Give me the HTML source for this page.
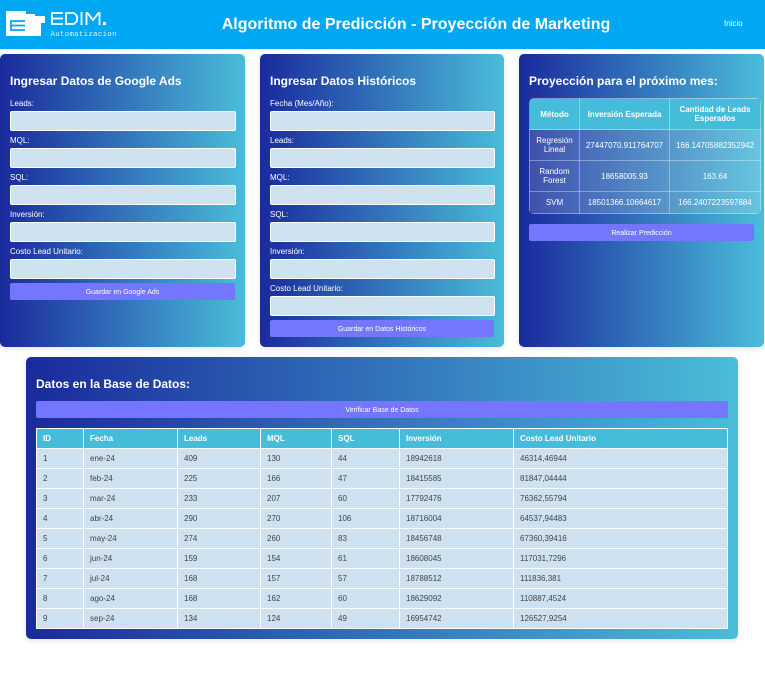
<!DOCTYPE html>
<html lang="es">
<head>
<meta charset="utf-8">
<title>Algoritmo de Predicción</title>
<style>
html,body{margin:0;padding:0;width:765px;height:673px;background:#fff;overflow:hidden;font-family:"Liberation Sans",Arial,sans-serif}
.header{position:absolute;left:0;top:0;width:765px;height:49px;background:#00a8f3}
.title{position:absolute;left:166px;width:500px;top:15px;text-align:center;color:#fff;font-size:16px;font-weight:bold;line-height:20px;white-space:nowrap}
.nav{position:absolute;left:724px;top:19px;color:#fff;font-size:8px;line-height:10px}
.card{position:absolute;border-radius:5px;background:linear-gradient(90deg,#1a2a9c,#4abdd9);box-shadow:0 2px 6px rgba(0,0,0,.1)}
h2{position:absolute;margin:0;color:#fff;font-size:12px;font-weight:bold;line-height:16px;white-space:nowrap}
label{position:absolute;color:#fff;font-size:8px;line-height:10px;white-space:nowrap}
.in{position:absolute;box-sizing:border-box;height:20px;background:#cfe2f0;border:1px solid #fff;border-radius:2px}
.btn{position:absolute;height:17px;background:#7476ff;border-radius:2px;color:#fff;font-size:7px;line-height:19px;text-align:center;white-space:nowrap}
table{position:absolute;border-collapse:collapse;table-layout:fixed}
.p{left:10px;top:44px;width:231px;height:116px;color:#fff;font-size:8px;text-align:center;background:rgba(255,255,255,.16);border-radius:5px;overflow:hidden}
.p th,.p td{border:1px solid rgba(255,255,255,.35);padding:0 2px;line-height:9px}
.p th{background:#45bcd9;font-weight:bold}
.d{left:10px;top:71px;width:691px;font-size:8px;color:#444}
.d th,.d td{border:1px solid #fff;padding:0 0 0 6px;height:19px;text-align:left;line-height:9px;background:#cde1f0}
.d th{background:#45bcd9;color:#fff;font-weight:bold}
</style>
</head>
<body>
<div class="header">
<svg style="position:absolute;left:0;top:0" width="125" height="48" viewBox="0 0 125 48">
<path fill="#fff" d="M6 11H26V14H35V16H45V23H41V36H6Z"/>
<path fill="none" stroke="#00a8f3" stroke-width="1.800" d="M25 21H11V30H25M11 25.500H25"/>
<path fill="none" stroke="#fff" stroke-width="1.800" d="M63 13H52V24H63M52 18.500H63M66 13H74L77 16V21L74 24H66ZM81.500 12V25M86.500 25V13H87.500L93 20L98.500 13H99.500V25"/>
<rect x="103" y="22" width="3" height="3" fill="#fff"/>
<text x="50.500" y="36" fill="#dff4ff" font-family="Liberation Mono,monospace" font-size="7.300" textLength="66">Automatizacion</text>
</svg>
<div class="title">Algoritmo de Predicción - Proyección de Marketing</div>
<div class="nav">Inicio</div>
</div>

<div class="card" style="left:0;top:54px;width:245px;height:293px">
<h2 style="left:10px;top:19px">Ingresar Datos de Google Ads</h2>
<label style="left:10px;top:45px">Leads:</label><div class="in" style="left:10px;top:57px;width:226px"></div>
<label style="left:10px;top:82px">MQL:</label><div class="in" style="left:10px;top:94px;width:226px"></div>
<label style="left:10px;top:119px">SQL:</label><div class="in" style="left:10px;top:131px;width:226px"></div>
<label style="left:10px;top:156px">Inversión:</label><div class="in" style="left:10px;top:168px;width:226px"></div>
<label style="left:10px;top:193px">Costo Lead Unitario:</label><div class="in" style="left:10px;top:205px;width:226px"></div>
<div class="btn" style="left:10px;top:229px;width:225px">Guardar en Google Ads</div>
</div>

<div class="card" style="left:260px;top:54px;width:244px;height:293px">
<h2 style="left:10px;top:19px">Ingresar Datos Históricos</h2>
<label style="left:10px;top:45px">Fecha (Mes/Año):</label><div class="in" style="left:10px;top:57px;width:225px"></div>
<label style="left:10px;top:82px">Leads:</label><div class="in" style="left:10px;top:94px;width:225px"></div>
<label style="left:10px;top:119px">MQL:</label><div class="in" style="left:10px;top:131px;width:225px"></div>
<label style="left:10px;top:156px">SQL:</label><div class="in" style="left:10px;top:168px;width:225px"></div>
<label style="left:10px;top:193px">Inversión:</label><div class="in" style="left:10px;top:205px;width:225px"></div>
<label style="left:10px;top:230px">Costo Lead Unitario:</label><div class="in" style="left:10px;top:242px;width:225px"></div>
<div class="btn" style="left:10px;top:266px;width:224px">Guardar en Datos Históricos</div>
</div>

<div class="card" style="left:519px;top:54px;width:245px;height:293px">
<h2 style="left:10px;top:19px">Proyección para el próximo mes:</h2>
<table class="p">
<colgroup><col style="width:50px"><col style="width:90px"><col style="width:91px"></colgroup>
<tr style="height:31px"><th>Método</th><th>Inversión Esperada</th><th>Cantidad de Leads Esperados</th></tr>
<tr style="height:31px"><td>Regresión Lineal</td><td>27447070.911764707</td><td>166.14705882352942</td></tr>
<tr style="height:31px"><td>Random Forest</td><td>18658005.93</td><td>163.64</td></tr>
<tr style="height:22px"><td>SVM</td><td>18501366.10664617</td><td>166.2407223597684</td></tr>
</table>
<div class="btn" style="left:10px;top:170px;width:225px">Realizar Predicción</div>
</div>

<div class="card" style="left:26px;top:357px;width:712px;height:282px">
<h2 style="left:10px;top:19px">Datos en la Base de Datos:</h2>
<div class="btn" style="left:10px;top:44px;width:692px">Verificar Base de Datos</div>
<table class="d">
<colgroup><col style="width:47px"><col style="width:94px"><col style="width:83px"><col style="width:71px"><col style="width:68px"><col style="width:114px"><col style="width:214px"></colgroup>
<tr><th>ID</th><th>Fecha</th><th>Leads</th><th>MQL</th><th>SQL</th><th>Inversión</th><th>Costo Lead Unitario</th></tr>
<tr><td>1</td><td>ene-24</td><td>409</td><td>130</td><td>44</td><td>18942618</td><td>46314,46944</td></tr>
<tr><td>2</td><td>feb-24</td><td>225</td><td>166</td><td>47</td><td>18415585</td><td>81847,04444</td></tr>
<tr><td>3</td><td>mar-24</td><td>233</td><td>207</td><td>60</td><td>17792476</td><td>76362,55794</td></tr>
<tr><td>4</td><td>abr-24</td><td>290</td><td>270</td><td>106</td><td>18716004</td><td>64537,94483</td></tr>
<tr><td>5</td><td>may-24</td><td>274</td><td>260</td><td>83</td><td>18456748</td><td>67360,39416</td></tr>
<tr><td>6</td><td>jun-24</td><td>159</td><td>154</td><td>61</td><td>18608045</td><td>117031,7296</td></tr>
<tr><td>7</td><td>jul-24</td><td>168</td><td>157</td><td>57</td><td>18788512</td><td>111836,381</td></tr>
<tr><td>8</td><td>ago-24</td><td>168</td><td>162</td><td>60</td><td>18629092</td><td>110887,4524</td></tr>
<tr><td>9</td><td>sep-24</td><td>134</td><td>124</td><td>49</td><td>16954742</td><td>126527,9254</td></tr>
</table>
</div>
</body>
</html>
